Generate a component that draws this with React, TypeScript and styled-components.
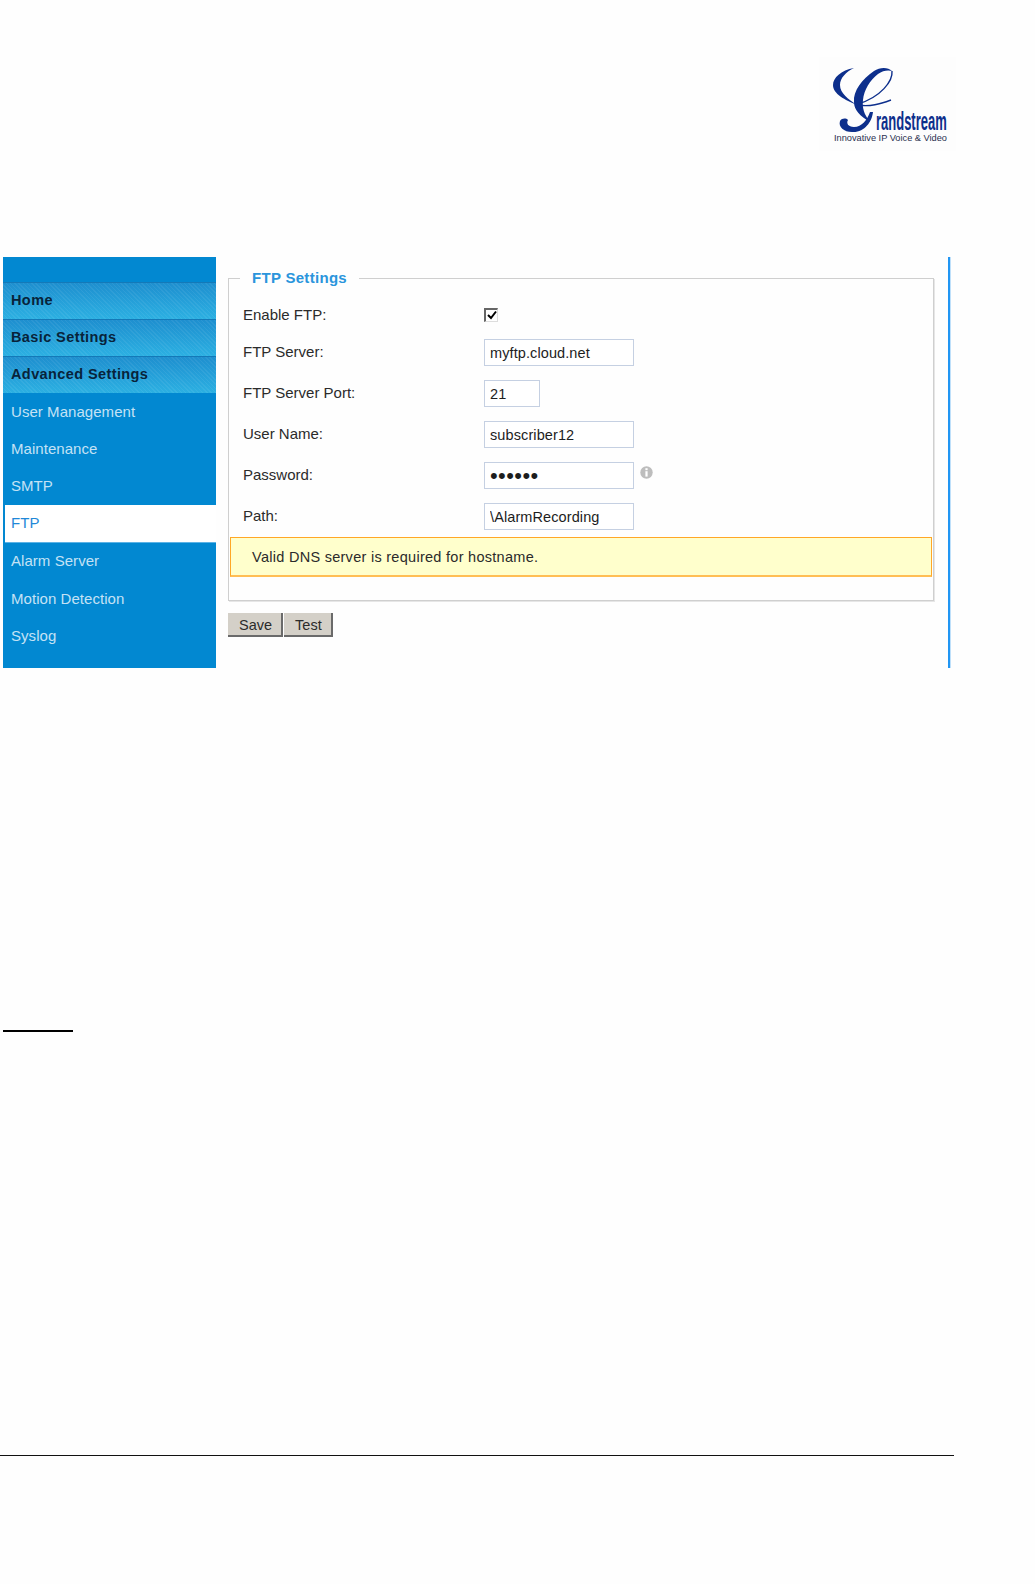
import { createGlobalStyle } from "styled-components";
import styled from "styled-components";

const GlobalStyle = createGlobalStyle`
  html, body {
    margin: 0;
    padding: 0;
    background: #fefefe;
    font-family: "Liberation Sans", Arial, sans-serif;
  }
`;

const Page = styled.div`
  width: 1035px;
  height: 1584px;
  overflow: hidden;
  padding-top: 50px;
  box-sizing: border-box;
`;

const Header = styled.header`
  display: flex;
  justify-content: flex-end;
  height: 110px;
  padding-right: 65px;
  margin-bottom: 97px;
`;

const Shot = styled.section`
  display: flex;
  height: 411px;
  margin-left: 3px;
  width: 947px;
`;

const Sidebar = styled.nav`
  width: 213px;
  flex: none;
  display: flex;
  flex-direction: column;
  padding-top: 25px;
  box-sizing: border-box;
  background: #0288d1;
`;

const GroupItem = styled.div`
  height: 37px;
  box-sizing: border-box;
  display: flex;
  align-items: center;
  padding: 0 0 3px 8px;
  font-size: 14.5px;
  font-weight: bold;
  letter-spacing: 0.4px;
  color: #08233a;
  border-top: 1px solid #1479b8;
  background:
    repeating-linear-gradient(45deg, rgba(255, 255, 255, 0.06) 0 1px, transparent 1px 3px),
    linear-gradient(#1e8fcf, #2cb0e2);
`;

const SubItem = styled.div<{ $active?: boolean }>`
  height: 37.4px;
  flex: none;
  box-sizing: border-box;
  display: flex;
  align-items: center;
  padding: 0 0 1px ${(p) => (p.$active ? "6px" : "8px")};
  margin-left: ${(p) => (p.$active ? "2px" : "0")};
  font-size: 15px;
  letter-spacing: 0.05px;
  color: ${(p) => (p.$active ? "#1f88d8" : "#c4e2f5")};
  background: ${(p) => (p.$active ? "#fff" : "transparent")};
  border-bottom: ${(p) => (p.$active ? "1px solid #5cb3e6" : "none")};
`;

const Content = styled.main`
  flex: 1;
  padding-left: 12px;
  border-right: 2px solid #2196f3;
  box-shadow: 1px 0 0 #bfe0fa;
`;

const Fieldset = styled.fieldset`
  width: 706px;
  height: 333px;
  margin: 11px 0 0;
  padding: 0;
  box-sizing: border-box;
  border: 1px solid #cfcfcf;
  box-shadow: 1px 1px 0 #e6e6e6;
`;

const Legend = styled.legend`
  margin-left: 11px;
  padding: 0 12px;
  height: 20px;
  line-height: 20px;
  font-size: 15px;
  font-weight: bold;
  letter-spacing: 0.3px;
  color: #2a95dc;
`;

const Rows = styled.div`
  display: flex;
  flex-direction: column;
  gap: 14px;
  padding: 18px 0 0 14px;
`;

const Row = styled.div`
  display: grid;
  grid-template-columns: 241px auto 1fr;
  align-items: center;
`;

const Label = styled.label`
  padding-bottom: 2px;
  font-size: 15px;
  color: #2b2b2b;
`;

const Check = styled.span`
  width: 14px;
  height: 14px;
  margin-bottom: 2px;
  box-sizing: border-box;
  display: flex;
  align-items: center;
  justify-content: center;
  background: #fff;
  border: 1px solid #ddd;
  border-top: 2px solid #666;
  border-left: 2px solid #666;
`;

const Input = styled.input<{ $short?: boolean; $secret?: boolean }>`
  width: ${(p) => (p.$short ? "56px" : "150px")};
  height: 27px;
  box-sizing: border-box;
  padding: 0 5px;
  border: 1px solid #c5d0e2;
  background: #fff;
  outline: none;
  font-family: "Liberation Sans", Arial, sans-serif;
  font-size: ${(p) => (p.$secret ? "22px" : "14.5px")};
  letter-spacing: ${(p) => (p.$secret ? "0.4px" : "0.1px")};
  color: #1d1d1d;
`;

const InfoIcon = styled.svg`
  margin: -7px 0 0 6px;
`;

const Alert = styled.div`
  margin: 7px 1px 0;
  height: 40px;
  box-sizing: border-box;
  display: flex;
  align-items: center;
  padding: 1px 0 0 21px;
  background: #ffffcc;
  border: 1px solid #ffa726;
  border-bottom: 2px solid #ffbe55;
  font-size: 14.5px;
  letter-spacing: 0.28px;
  color: #2b2b2b;
`;

const Buttons = styled.div`
  display: flex;
  gap: 1px;
  margin-top: 12px;
`;

const Button = styled.button`
  height: 24px;
  box-sizing: border-box;
  padding: 1px 9px 0 11px;
  background: #d4d0c8;
  border: none;
  border-right: 2px solid #6a6a6a;
  border-bottom: 2px solid #6a6a6a;
  font-family: "Liberation Sans", Arial, sans-serif;
  font-size: 14.5px;
  color: #2b2b2b;
`;

const ShortRule = styled.hr`
  width: 70px;
  height: 2px;
  margin: 362px 0 0 3px;
  border: none;
  background: #000;
`;

const FooterRule = styled.hr`
  width: 954px;
  height: 1px;
  margin: 423px 0 0;
  border: none;
  background: #111;
`;

function Logo() {
  return (
    <svg width="170" height="110" viewBox="0 0 170 110">
      <rect x="19" y="7" width="137" height="94" fill="#fdfdfd" />
      <g fill="#0d2f8c">
        <path d="M54 18 C41 20 33 28 33 35 C33 44 45 50 57 55 C48 49 40 43 40 35 C40 28 46 22 54 18 Z" />
        <path d="M92 21 C88 17 80 17 74 21 C62 29 53 41 54 52 C54 60 60 66 70 72 C64 64 62 58 63 50 C64 40 70 30 78 24 C83 20 89 20 92 21 Z" />
        <path d="M73 62 C72 72 64 83 52 82 C44 82 38 77 40 71 C42 68 46 68 48 70 C46 73 48 77 54 77 C62 77 67 70 70 62 Z" />
      </g>
      <g fill="none" stroke="#0d2f8c" strokeWidth="1.4">
        <path d="M92 21 C93 31 81 47 58 54" />
        <path d="M58 55 C70 57 80 54 91 50" />
      </g>
      <text
        transform="translate(76 80) scale(0.52 1)"
        fontFamily="'Liberation Sans', Arial, sans-serif"
        fontSize="25"
        fontWeight="bold"
        fill="#0d2f8c"
      >
        randstream
      </text>
      <text
        x="34"
        y="91"
        fontFamily="'Liberation Sans', Arial, sans-serif"
        fontSize="9"
        fill="#2a3050"
        textLength="113"
        lengthAdjust="spacingAndGlyphs"
      >
        Innovative IP Voice &amp; Video
      </text>
    </svg>
  );
}

const groups = ["Home", "Basic Settings", "Advanced Settings"];
const items = ["User Management", "Maintenance", "SMTP", "FTP", "Alarm Server", "Motion Detection", "Syslog"];

export default function App() {
  return (
    <Page>
      <GlobalStyle />
      <Header>
        <Logo />
      </Header>

      <Shot>
        <Sidebar>
          {groups.map((g) => (
            <GroupItem key={g}>{g}</GroupItem>
          ))}
          {items.map((i) => (
            <SubItem key={i} $active={i === "FTP"}>
              {i}
            </SubItem>
          ))}
        </Sidebar>

        <Content>
          <Fieldset>
            <Legend>FTP Settings</Legend>
            <Rows>
              <Row>
                <Label>Enable FTP:</Label>
                <Check>
                  <svg width="10" height="10" viewBox="0 0 10 10">
                    <path d="M1 5 L4 8 L9 1.5" fill="none" stroke="#000" strokeWidth="2" />
                  </svg>
                </Check>
              </Row>
              <Row>
                <Label>FTP Server:</Label>
                <Input readOnly value="myftp.cloud.net" />
              </Row>
              <Row>
                <Label>FTP Server Port:</Label>
                <Input $short readOnly value="21" />
              </Row>
              <Row>
                <Label>User Name:</Label>
                <Input readOnly value="subscriber12" />
              </Row>
              <Row>
                <Label>Password:</Label>
                <Input $secret type="password" readOnly value="secret" />
                <InfoIcon width="13" height="13" viewBox="0 0 13 13">
                  <circle cx="6.5" cy="6.5" r="6.2" fill="#bdbdbd" />
                  <rect x="5.4" y="2.2" width="2.2" height="2" fill="#fff" />
                  <rect x="5.4" y="5.2" width="2.2" height="5.4" fill="#fff" />
                </InfoIcon>
              </Row>
              <Row>
                <Label>Path:</Label>
                <Input readOnly value="\AlarmRecording" />
              </Row>
            </Rows>
            <Alert>Valid DNS server is required for hostname.</Alert>
          </Fieldset>
          <Buttons>
            <Button>Save</Button>
            <Button>Test</Button>
          </Buttons>
        </Content>
      </Shot>

      <ShortRule />
      <FooterRule />
    </Page>
  );
}
